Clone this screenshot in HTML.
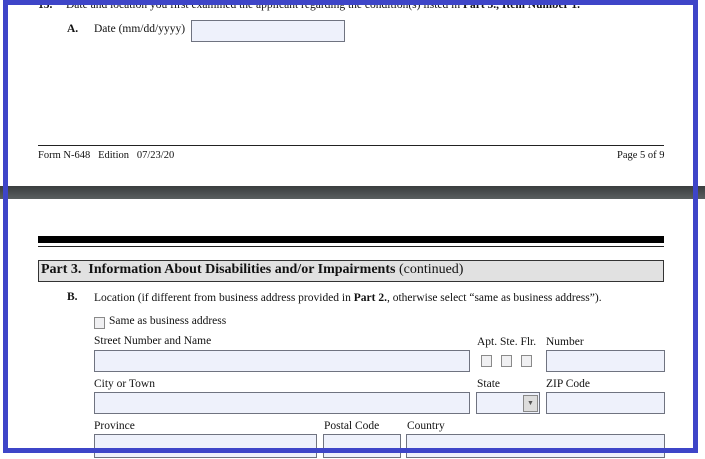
<!DOCTYPE html>
<html><head><style>
body{margin:0;width:705px;height:459px;background:#fff;position:relative;overflow:hidden;font-family:"Liberation Serif",serif;color:#111;}
.a{position:absolute;white-space:nowrap;}
.f{position:absolute;background:#eef1fb;border:1px solid #6f7380;box-sizing:border-box;}
.t{font-size:11.5px;}
.cb{position:absolute;width:11px;height:12px;border:1px solid #8a8a8a;background:#f0f0f2;box-sizing:border-box;}
</style></head><body>
<div class="a t" style="left:38px;top:-1px;"><b>15.</b></div>
<div class="a t" style="left:66px;top:-1px;">Date and location you first examined the applicant regarding the condition(s) listed in <b>Part 3., Item Number 1.</b></div>
<div class="a t" style="left:67px;top:23px;"><b>A.</b></div>
<div class="a t" style="left:94px;top:23px;">Date (mm/dd/yyyy)</div>
<div class="f" style="left:191px;top:20px;width:154px;height:22px;"></div>
<div class="a" style="left:38px;top:145px;width:626px;height:1px;background:#222;"></div>
<div class="a" style="left:38px;top:150px;font-size:10.5px;">Form N-648&nbsp;&nbsp; Edition&nbsp;&nbsp; 07/23/20</div>
<div class="a" style="left:617px;top:150px;font-size:10.5px;">Page 5 of 9</div>
<div class="a" style="left:0;top:186px;width:705px;height:13px;background:linear-gradient(#3a3d3e,#5a5f60);"></div>
<div class="a" style="left:38px;top:236px;width:626px;height:7px;background:#000;"></div>
<div class="a" style="left:38px;top:246px;width:626px;height:1px;background:#222;"></div>
<div class="a" style="left:38px;top:260px;width:626px;height:22px;background:#e1e1e1;border:1px solid #333;box-sizing:border-box;"></div>
<div class="a" style="left:41px;top:262px;font-size:14px;"><b>Part 3.&nbsp; Information About Disabilities and/or Impairments</b> (continued)</div>
<div class="a t" style="left:67px;top:291px;"><b>B.</b></div>
<div class="a t" style="left:94px;top:292px;font-size:11.5px;">Location (if different from business address provided in <b>Part 2.</b>, otherwise select “same as business address”).</div>
<div class="cb" style="left:94px;top:317px;"></div>
<div class="a t" style="left:109px;top:315px;">Same as business address</div>
<div class="a t" style="left:94px;top:335px;">Street Number and Name</div>
<div class="a t" style="left:477px;top:336px;">Apt. Ste. Flr.</div>
<div class="a t" style="left:546px;top:336px;">Number</div>
<div class="f" style="left:94px;top:350px;width:376px;height:22px;"></div>
<div class="cb" style="left:481px;top:355px;"></div>
<div class="cb" style="left:501px;top:355px;"></div>
<div class="cb" style="left:521px;top:355px;"></div>
<div class="f" style="left:546px;top:350px;width:119px;height:22px;"></div>
<div class="a t" style="left:94px;top:378px;">City or Town</div>
<div class="a t" style="left:477px;top:378px;">State</div>
<div class="a t" style="left:546px;top:378px;">ZIP Code</div>
<div class="f" style="left:94px;top:392px;width:376px;height:22px;"></div>
<div class="f" style="left:476px;top:392px;width:64px;height:22px;"></div>
<div class="a" style="left:523px;top:395px;width:15px;height:17px;background:#ddd;border:1px solid #888;box-sizing:border-box;font-size:7px;text-align:center;line-height:15px;color:#555;">▼</div>
<div class="f" style="left:546px;top:392px;width:119px;height:22px;"></div>
<div class="a t" style="left:94px;top:420px;">Province</div>
<div class="a t" style="left:324px;top:420px;">Postal Code</div>
<div class="a t" style="left:407px;top:420px;">Country</div>
<div class="f" style="left:94px;top:434px;width:223px;height:24px;"></div>
<div class="f" style="left:323px;top:434px;width:78px;height:24px;"></div>
<div class="f" style="left:406px;top:434px;width:259px;height:24px;"></div>
<div class="a" style="left:3px;top:0;width:695px;height:453px;border:5px solid #3e45c8;box-sizing:border-box;"></div>
</body></html>
